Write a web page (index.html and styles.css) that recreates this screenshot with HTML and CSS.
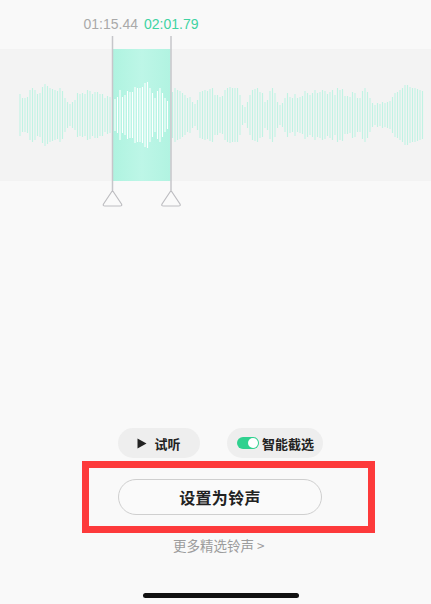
FILE: index.html
```html
<!DOCTYPE html>
<html lang="zh-CN">
<head>
<meta charset="utf-8">
<title>设置铃声</title>
<link rel="stylesheet" href="styles.css">
</head>
<body>
<div class="screen">
  <section class="editor">
    <div class="times">
      <span class="time-start">01:15.44</span>
      <span class="time-end">02:01.79</span>
    </div>
    <svg class="wave" width="431" height="178" viewBox="0 0 431 178">
      <defs>
        <linearGradient id="selFill" x1="0" x2="1" y1="0" y2="0">
          <stop offset="0" stop-color="#aff3e0"/>
          <stop offset="0.5" stop-color="#bdf6e7"/>
          <stop offset="1" stop-color="#b1f3e1"/>
        </linearGradient>
      </defs>
      <rect class="band" x="0" y="17" width="431" height="132"/>
      <rect x="113" y="17" width="57.5" height="132" fill="url(#selFill)"/>
      <g id="bars"></g>
      <!-- trim handles -->
      <g class="handle">
        <line x1="112.5" y1="4" x2="112.5" y2="158"/>
        <path d="M112.5 158.5 L103.5 172 Q102.5 174 105 174 L120 174 Q122.5 174 121.5 172 Z"/>
      </g>
      <g class="handle">
        <line x1="171" y1="4" x2="171" y2="158"/>
        <path d="M171 158.5 L162 172 Q161 174 163.5 174 L178.5 174 Q181 174 180 172 Z"/>
      </g>
    </svg>
  </section>

  <section class="controls">
    <button class="pill">
      <svg class="play" width="10" height="11" viewBox="0 0 10 11"><path d="M0.5 0.5 L9.5 5.5 L0.5 10.5 Z"/></svg>
      <span>试听</span>
    </button>
    <button class="pill pill-smart">
      <span class="toggle"><span class="knob"></span></span>
      <span>智能截选</span>
    </button>
  </section>

  <div class="highlight">
    <button class="set-btn">设置为铃声</button>
  </div>

  <a class="more">更多精选铃声 &gt;</a>

  <div class="home-bar"></div>
</div>
<script src="script.js"></script>
</body>
</html>
```

FILE: styles.css
```css
* { box-sizing: border-box; }

html, body {
  margin: 0;
  padding: 0;
  background: #f9f9f9;
}

.screen {
  width: 431px;
  height: 604px;
  display: flex;
  flex-direction: column;
  font-family: "Noto Sans CJK SC", "Liberation Sans", sans-serif;
  color: #222;
  overflow: hidden;
}

/* waveform editor */
.editor {
  display: flex;
  flex-direction: column;
}

.times {
  display: flex;
  justify-content: center;
  gap: 6px;
  width: 282px;
  padding-top: 16px;
  height: 32px;
  font-family: "Liberation Sans", Arial, sans-serif;
  font-size: 14px;
  line-height: 16px;
}

.time-start { color: #a9a9a9; }
.time-end { color: #3fd3a2; }

.wave { display: block; }

.band { fill: #f3f3f3; }

.bar-out { stroke: #c0f3e3; }
.bar-in { stroke: #ffffff; }

.handle line {
  stroke: #c6c6ca;
  stroke-width: 1.5;
}
.handle path {
  fill: #fafafa;
  stroke: #bdbdc1;
  stroke-width: 1.2;
  stroke-linejoin: round;
}

/* preview controls */
.controls {
  margin-top: 218px;
  padding-left: 118px;
  display: flex;
  gap: 27px;
  height: 30px;
}

.pill {
  height: 30px;
  border: none;
  border-radius: 15px;
  background: #eeeeee;
  display: flex;
  align-items: center;
  font-family: inherit;
  font-size: 13px;
  font-weight: 700;
  color: #222;
  padding: 0;
}

.pill:first-child {
  width: 82px;
  justify-content: center;
  gap: 7px;
}

.play { fill: #222; }

.pill-smart {
  width: 96px;
  padding-left: 10px;
  gap: 3px;
}

.toggle {
  width: 22px;
  height: 12px;
  border-radius: 6px;
  background: #2fd18f;
  display: flex;
  justify-content: flex-end;
  align-items: center;
  padding-right: 1px;
}

.knob {
  width: 10px;
  height: 10px;
  border-radius: 50%;
  background: #fff;
}

/* primary action */
.highlight {
  margin-top: 3px;
  margin-left: 82px;
  width: 293px;
  height: 72px;
  border: 7px solid #fd3a3b;
  padding: 11px 46px 11px 29px;
}

.set-btn {
  width: 204px;
  height: 36px;
  border: 1px solid #cfcfcf;
  border-radius: 18px;
  background: #fafafa;
  font-family: inherit;
  font-size: 16px;
  font-weight: 700;
  color: #222;
  padding: 0;
  letter-spacing: 0.3px;
}

.more {
  margin-top: 3px;
  padding-left: 173px;
  font-size: 13.5px;
  line-height: 18px;
  color: #9c9c9c;
}

.home-bar {
  margin-top: 39px;
  margin-left: 143px;
  width: 156px;
  height: 5px;
  border-radius: 3px;
  background: #111;
}
```

FILE: script.js
```js
// Waveform amplitudes (half-height in px), one per bar, 2.5px apart from x=20.
var amps = [
  21,17,17,18,25,27,25,21,22,28,31,29,27,26,25,24,27,24,17,13,
  11,13,15,22,21,22,21,25,24,21,23,23,21,21,17,19,18,0,16,18,
  25,18,20,24,23,23,28,27,27,28,32,33,27,22,17,24,27,22,17,14,
  0,23,27,25,24,22,20,17,18,13,11,15,23,24,25,24,26,27,20,20,
  18,19,25,27,28,27,27,27,20,10,8,13,20,25,26,27,23,22,13,15,
  24,27,22,13,10,12,17,22,18,17,21,17,18,19,24,22,20,22,25,22,
  23,25,24,21,23,25,20,27,25,26,19,19,18,23,22,17,17,24,27,23,
  17,12,10,12,11,13,12,13,14,18,22,23,25,27,30,30,28,27,27,26,
  25,24
];

var NS = "http://www.w3.org/2000/svg";
var group = document.getElementById("bars");
var mid = 83; // vertical centre of the band in the svg

amps.forEach(function (h, i) {
  if (!h) return;
  var x = 20 + i * 2.5;
  var line = document.createElementNS(NS, "line");
  line.setAttribute("x1", x);
  line.setAttribute("x2", x);
  line.setAttribute("y1", mid - h);
  line.setAttribute("y2", mid + h);
  line.setAttribute("stroke-width", "1.1");
  line.setAttribute("class", x > 113 && x < 170.5 ? "bar-in" : "bar-out");
  group.appendChild(line);
});
```
